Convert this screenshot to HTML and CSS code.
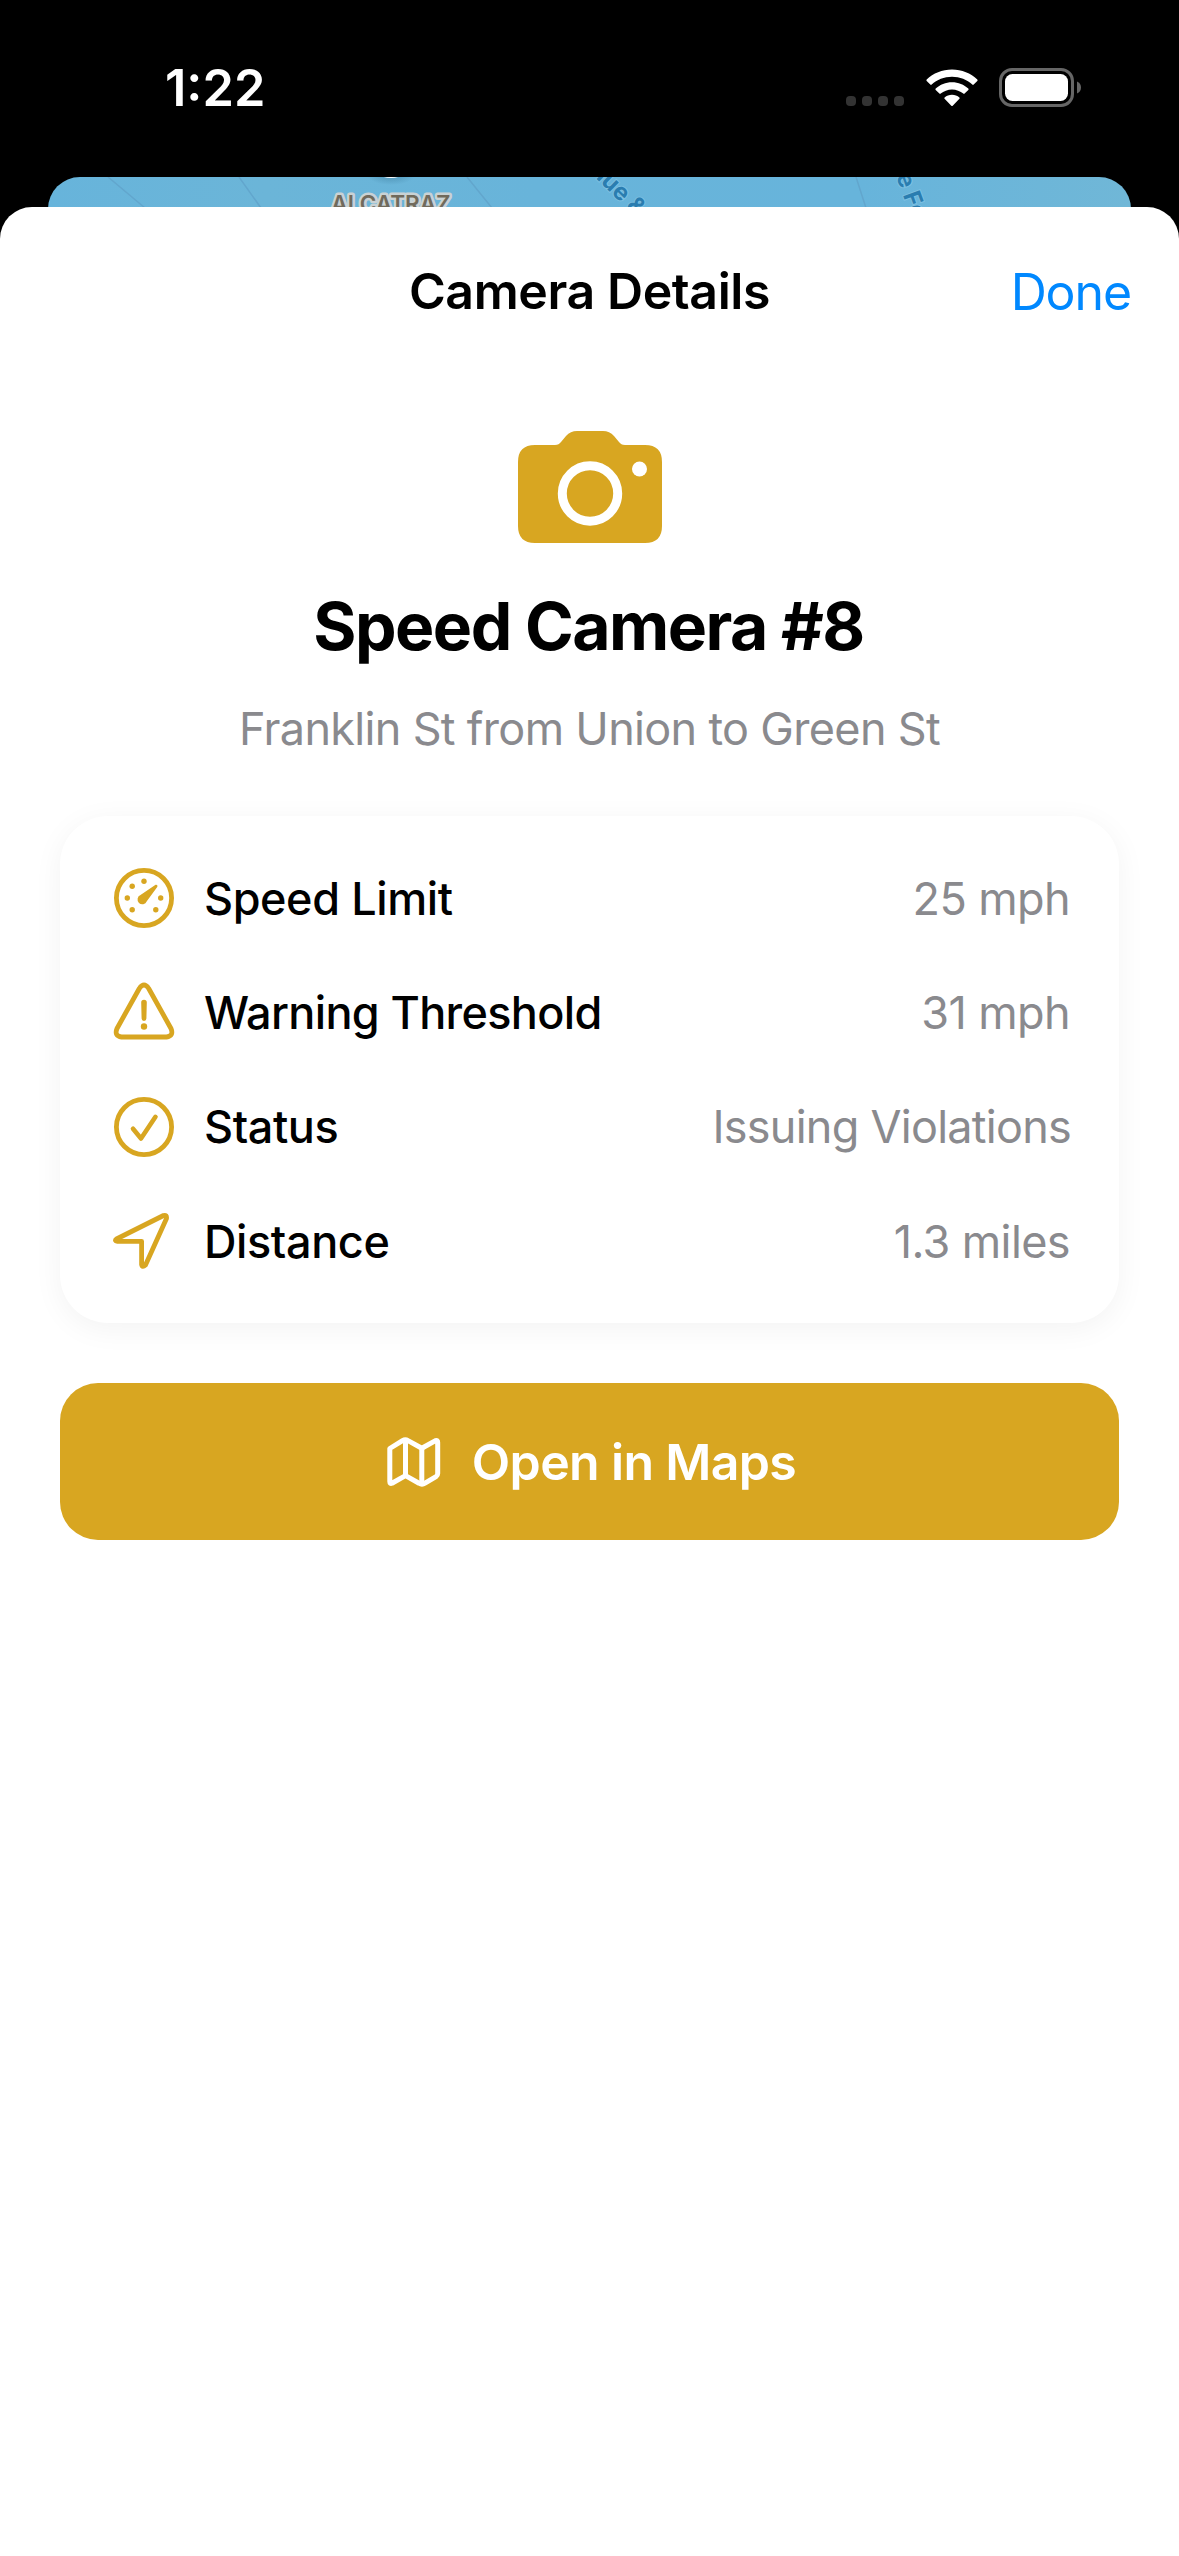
FILE: index.html
```html
<!DOCTYPE html>
<html lang="en">
<head>
<meta charset="utf-8">
<title>Camera Details</title>
<link rel="stylesheet" href="styles.css">
</head>
<body>
<div class="screen">
  <header class="status-bar">
    <span class="clock">1:22</span>
    <div class="indicators">
      <div class="cellular"><i></i><i></i><i></i><i></i></div>
      <svg class="wifi" viewBox="0 0 52 38" width="52" height="38">
        <g fill="#fff">
          <path d="M26 0.600C35.800 0.600 44.800 4.400 51.300 10.600Q52 11.300 51.300 12L47.700 15.600Q47 16.200 46.300 15.600C41 10.700 33.900 7.800 26 7.800S11 10.700 5.700 15.600Q5 16.200 4.300 15.600L0.700 12Q0 11.300 0.700 10.600C7.200 4.400 16.200 0.600 26 0.600Z"/>
          <path d="M26 13.200C32.300 13.200 38 15.600 42.300 19.500Q43 20.200 42.300 20.900L38.600 24.600Q38 25.200 37.300 24.600C34.300 22 30.300 20.400 26 20.400S17.700 22 14.700 24.600Q14 25.200 13.400 24.600L9.700 20.900Q9 20.200 9.700 19.500C14 15.600 19.700 13.200 26 13.200Z"/>
          <path d="M26 25.800C28.800 25.800 31.400 26.800 33.400 28.400Q34.100 29.100 33.400 29.800L26.700 36.700Q26 37.400 25.300 36.700L18.600 29.800Q17.900 29.100 18.600 28.400C20.600 26.800 23.200 25.800 26 25.800Z"/>
        </g>
      </svg>
      <svg class="battery" viewBox="0 0 83 39" width="83" height="39">
        <rect x="1.500" y="1.500" width="72" height="36" rx="11.500" fill="none" stroke="#666" stroke-width="3"/>
        <rect x="6" y="6" width="63" height="27" rx="7.500" fill="#fff"/>
        <path d="M78 13.500C80.500 14.500 82 16.800 82 19.500S80.500 24.500 78 25.500Z" fill="#666"/>
      </svg>
    </div>
  </header>

  <div class="map">
    <svg viewBox="0 0 1083 60" width="1083" height="60">
      <defs>
        <linearGradient id="water" x1="0" x2="1" y1="0" y2="0">
          <stop offset="0" stop-color="#67b4db"/>
          <stop offset="0.200" stop-color="#6bb5d8"/>
          <stop offset="0.450" stop-color="#68b4da"/>
          <stop offset="0.750" stop-color="#67b4db"/>
          <stop offset="1" stop-color="#70b7d7"/>
        </linearGradient>
        <radialGradient id="pin-shade">
          <stop offset="0" stop-color="#4f93b5"/>
          <stop offset="1" stop-color="#4f93b5" stop-opacity="0"/>
        </radialGradient>
      </defs>
      <rect width="1083" height="60" fill="url(#water)"/>
      <g stroke="#62a6cd" stroke-width="1.500">
        <path d="M60 0L97 31M191 0L213 31M419 0L444 31M808 0L818 31"/>
      </g>
      <ellipse cx="343" cy="-2" rx="24" ry="10" fill="url(#pin-shade)"/>
      <ellipse cx="343" cy="-2" rx="10" ry="3" fill="#fff"/>
      <text class="place" x="343" y="35" text-anchor="middle">ALCATRAZ</text>
      <text class="route" transform="translate(536 -10) rotate(44)">Blue &amp; Gold</text>
      <text class="route" transform="translate(848 -1) rotate(70)">e Ferry</text>
    </svg>
  </div>

  <main class="sheet">
    <nav class="nav">
      <h1 class="nav-title">Camera Details</h1>
      <a class="done">Done</a>
    </nav>

    <section class="hero">
      <svg class="camera" viewBox="0 0 144 112" width="144" height="112">
        <path fill="#d8a621" d="M17 14H37C40 14 41.300 13 43 11L48 5Q52.500 0 59 0H85Q91.500 0 96 5L101 11C102.700 13 104 14 107 14H127Q144 14 144 31V95Q144 112 127 112H17Q0 112 0 95V31Q0 14 17 14Z"/>
        <circle cx="72" cy="62.500" r="27.700" fill="none" stroke="#fff" stroke-width="9"/>
        <circle cx="121.500" cy="38" r="7.500" fill="#fff"/>
      </svg>
      <h2 class="name">Speed Camera #8</h2>
      <p class="street">Franklin St from Union to Green St</p>
    </section>

    <section class="card">
      <div class="row">
        <svg class="icon" viewBox="0 0 62 62" width="62" height="62">
          <circle cx="31" cy="31" r="27.600" fill="none" stroke="#d8a621" stroke-width="4.800"/>
          <g fill="#d8a621">
            <circle cx="31" cy="14.300" r="2.700"/><circle cx="19.200" cy="19.200" r="2.700"/><circle cx="14.300" cy="31" r="2.700"/>
            <circle cx="19.200" cy="42.800" r="2.700"/><circle cx="42.800" cy="42.800" r="2.700"/><circle cx="47.700" cy="31" r="2.700"/>
            <path d="M42.600 17.800L27.500 28.100A4.800 4.800 0 1 0 33.800 34.300L44.400 19.700Q44.900 17.300 42.600 17.800Z"/>
          </g>
        </svg>
        <span class="label">Speed Limit</span><span class="value">25 mph</span>
      </div>
      <div class="row">
        <svg class="icon" viewBox="0 0 62 62" width="62" height="62">
          <path d="M26.300 7.500Q31 0.500 35.700 7.500L58 47.500Q61 55 53.500 56H8.500Q1 55 4 47.500Z" fill="none" stroke="#d8a621" stroke-width="4.800" stroke-linejoin="round"/>
          <path d="M28.200 21.500A2.800 2.800 0 0 1 33.800 21.500L33.400 37.500A2.400 2.400 0 0 1 28.600 37.500Z" fill="#d8a621"/>
          <circle cx="31" cy="45.500" r="3.200" fill="#d8a621"/>
        </svg>
        <span class="label label-long">Warning Threshold</span><span class="value">31 mph</span>
      </div>
      <div class="row">
        <svg class="icon" viewBox="0 0 62 62" width="62" height="62" fill="none" stroke="#d8a621" stroke-linecap="round" stroke-linejoin="round">
          <circle cx="31" cy="31" r="27.600" stroke-width="4.800"/>
          <path d="M20 32.800L28 42.500L42.500 20.800" stroke-width="4.600"/>
        </svg>
        <span class="label">Status</span><span class="value value-long">Issuing Violations</span>
      </div>
      <div class="row">
        <svg class="icon" viewBox="0 0 62 62" width="62" height="62">
          <path d="M3.500 29L50.500 5.500Q54 4.500 53.500 8.500L32.500 55Q29.300 58 28.600 54.500V31.300H4.500Q1 30.800 3.500 29Z" fill="none" stroke="#d8a621" stroke-width="4.800" stroke-linejoin="round"/>
        </svg>
        <span class="label">Distance</span><span class="value">1.3 miles</span>
      </div>
    </section>

    <a class="open">
      <svg class="map-icon" viewBox="0 0 54 50" width="54" height="50" fill="none" stroke="#fff" stroke-width="5" stroke-linejoin="round">
        <path d="M2.800 11.500L15.500 3.600Q18.300 2 21 3.600L34.800 11.300L48.500 3.600Q50.700 2.800 50.700 5.400V36.500Q50.700 38.500 49 39.600L38 46.200Q35 48 32 46.200L18.500 38.600L5 46.200Q2.800 47 2.800 44.500Z"/>
        <path d="M18.500 3.500V38.500M34.800 11.500V46.500"/>
      </svg>
      <span class="open-text">Open in Maps</span>
    </a>
  </main>
</div>
</body>
</html>
```
FILE: styles.css
```css
* { box-sizing: border-box; margin: 0; padding: 0; }
body { background: #000; font-family: Inter, "Liberation Sans", sans-serif; color: #000; }
.screen { width: 1179px; height: 2556px; overflow: hidden; display: flex; flex-direction: column; background: #000; }

.status-bar { height: 177px; flex: none; display: flex; justify-content: space-between; align-items: flex-start; padding: 68px 97px 0 165px; }
.clock { color: #fff; font-size: 50.500px; font-weight: 600; line-height: 40px; }
.indicators { display: flex; align-items: flex-start; }
.cellular { display: flex; gap: 6px; margin: 28px 22px 0 0; }
.cellular i { width: 10px; height: 10px; border-radius: 4px; background: #333; }
.wifi { margin: 1px 21px 0 0; }

.map { flex: none; height: 60px; margin: 0 48px -30px; border-radius: 32px 32px 0 0; overflow: hidden; }
.map svg { display: block; }
.place { font-size: 22.500px; font-weight: 600; fill: #706a5c; stroke: #c9d2d4; stroke-width: 5px; paint-order: stroke; stroke-linejoin: round; }
.route { font-size: 24px; font-weight: 700; fill: #2a7db0; stroke: #7cc0e2; stroke-width: 2px; paint-order: stroke; }

.sheet { position: relative; flex: 1; background: #fff; border-radius: 32px 32px 0 0; padding: 0 60px; display: flex; flex-direction: column; }
.nav { height: 168px; display: grid; grid-template-columns: 1fr auto 1fr; align-items: center; margin: 0 -12px; }
.nav-title { grid-column: 2; font-size: 50px; font-weight: 600; line-height: 60px; letter-spacing: -0.400px; white-space: nowrap; }
.done { justify-self: end; color: #08f; font-size: 50px; line-height: 60px; letter-spacing: -1.100px; padding-top: 2px; }

.hero { display: flex; flex-direction: column; align-items: center; padding-top: 56px; }
.name { margin-top: 43px; font-size: 66px; font-weight: 700; line-height: 80px; letter-spacing: -1.500px; padding-right: 2px; white-space: nowrap; }
.street { margin-top: 36px; font-size: 45px; line-height: 54px; letter-spacing: -0.680px; color: #8a8a8e; white-space: nowrap; }

.card { margin-top: 60px; height: 507px; border-radius: 48px; background: #fff; box-shadow: 0 6px 30px rgba(0, 0, 0, 0.050); padding: 25px 48px; display: flex; flex-direction: column; }
.row { height: 114.300px; flex: none; display: flex; align-items: center; }
.icon { margin-left: 5px; flex: none; }
.label { margin-left: 29px; font-size: 45px; font-weight: 500; letter-spacing: -0.400px; white-space: nowrap; }
.label-long { letter-spacing: -0.650px; }
.value { margin-left: auto; padding-right: 1px; font-size: 45px; letter-spacing: -0.600px; color: #8a8a8e; white-space: nowrap; }
.value-long { padding-right: 0; letter-spacing: -0.750px; }

.open { margin-top: 60px; height: 157px; border-radius: 38px; background: #d8a621; color: #fff; display: flex; align-items: center; justify-content: center; gap: 31px; padding-left: 4px; }
.open-text { font-size: 50px; font-weight: 600; line-height: 60px; letter-spacing: -0.650px; white-space: nowrap; }
```
